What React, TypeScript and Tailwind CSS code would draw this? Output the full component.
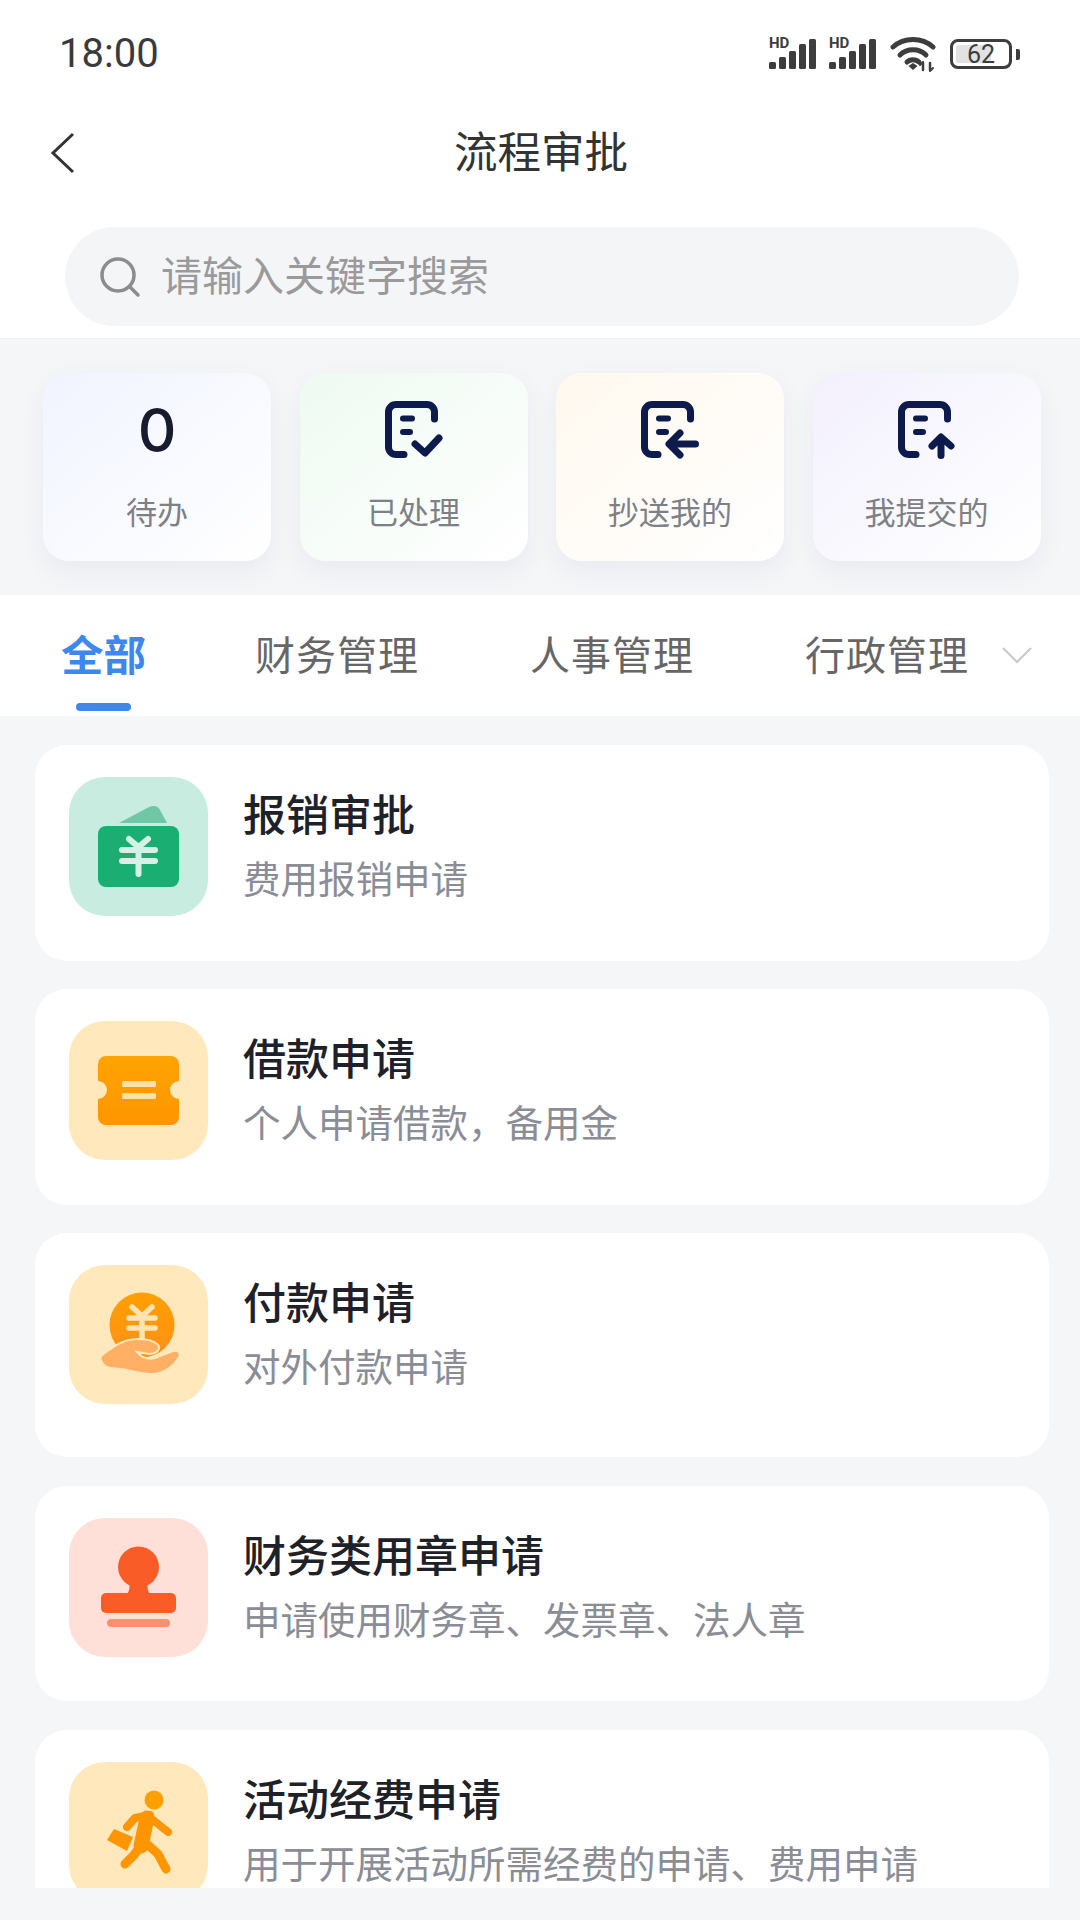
import React from "react";

const Signal = () => (
  <div className="relative w-[47px] h-[30px]">
    <span className="absolute left-0 top-[-3px] text-[#3d3d3d] text-[15px] leading-[15px] font-bold font-['Roboto',sans-serif]">HD</span>
    <svg width="47" height="30" viewBox="0 0 47 30" fill="#3d3d3d">
      <rect x="0" y="23" width="7" height="7" rx="1.5" />
      <rect x="10" y="18" width="7" height="12" rx="1.5" />
      <rect x="20" y="12" width="7" height="18" rx="1.5" />
      <rect x="30" y="5" width="7" height="25" rx="1.5" />
      <rect x="40" y="0" width="7" height="30" rx="1.5" />
    </svg>
  </div>
);

const Wifi = () => (
  <svg width="48" height="36" viewBox="0 0 48 36" fill="none" stroke="#3d3d3d" strokeWidth="5" strokeLinecap="round">
    <path d="M3 11 C14 1 32 1 43 11" />
    <path d="M10 19 C17 12 29 12 36 19" />
    <path d="M17 26 C20 23 26 23 29 26" />
    <path d="M18.500 30 L23 27 L27.500 30 L23 34 Z" fill="#3d3d3d" stroke="none" />
    <path d="M33 27 V34 M40 27 V34" strokeWidth="2.500" />
    <path d="M30 29 L33 26 M40 35 L43 32" strokeWidth="2" />
  </svg>
);

const Battery = () => (
  <div className="flex items-center gap-[4px]">
    <div className="relative flex items-center w-[62px] h-[30px] border-[3px] border-[#3d3d3d] rounded-[8px] p-[3px]">
      <div className="w-[35px] h-full bg-[#e2e2e2] rounded-[2px]" />
      <span className="absolute inset-0 flex items-center justify-center text-[25px] leading-none text-[#3d3d3d] font-['Roboto',sans-serif]">62</span>
    </div>
    <div className="w-[4px] h-[11px] bg-[#3d3d3d] rounded-r-[2px]" />
  </div>
);

const DocIcon = ({ tail, children }: { tail: number; children: React.ReactNode }) => (
  <svg width="58" height="58" viewBox="0 0 58 58" fill="none" stroke="#0d1b4c" strokeLinecap="round" strokeLinejoin="round">
    <path d={`M49.500 18 V11 A7.500 7.500 0 0 0 42 3.500 H11 A7.500 7.500 0 0 0 3.500 11 V46 A7.500 7.500 0 0 0 11 53.500 H${tail}`} strokeWidth="7" />
    <path d="M18 17.500 H27 M18 31 H25" strokeWidth="6" />
    {children}
  </svg>
);

const stats = [
  { label: "待办", bg: "from-[#f1f4ff] to-white" },
  {
    label: "已处理",
    bg: "from-[#eefaf1] to-white",
    icon: (
      <DocIcon tail={19}>
        <path d="M30 43 L40 52 L54 37" strokeWidth="7" />
      </DocIcon>
    ),
  },
  {
    label: "抄送我的",
    bg: "from-[#fff8ee] to-white",
    icon: (
      <DocIcon tail={17}>
        <path d="M29 43 H54.500 M39 32 L28 43 L39 54" strokeWidth="7" />
      </DocIcon>
    ),
  },
  {
    label: "我提交的",
    bg: "from-[#f3f0fd] to-white",
    icon: (
      <DocIcon tail={18}>
        <path d="M43 38 V54.500 M34 45 L43 36 L53 45" strokeWidth="7" />
      </DocIcon>
    ),
  },
];

const Yen = ({ color }: { color: string }) => (
  <g stroke={color} strokeWidth="6" strokeLinecap="round" fill="none">
    <path d="M60 62 L69.500 70 L79 62" />
    <path d="M53 73 H86 M53 84 H86 M69.500 70 V97" />
  </g>
);

const IconBox = ({ bg, children }: { bg: string; children: React.ReactNode }) => (
  <div className={`w-[139px] h-[139px] rounded-[36px] shrink-0 ${bg}`}>
    <svg width="139" height="139" viewBox="0 0 139 139">
      {children}
    </svg>
  </div>
);

const items = [
  {
    title: "报销审批",
    desc: "费用报销申请",
    box: "h-[216px] mb-[28px]",
    icon: (
      <IconBox bg="bg-[#c8ecdf]">
        <path d="M50 46 L80 30 Q88 27 91 33 L98 46 Z" fill="#6fc7a6" />
        <rect x="29" y="49" width="81" height="61" rx="8" fill="#1aae72" />
        <Yen color="#d6f1e6" />
      </IconBox>
    ),
  },
  {
    title: "借款申请",
    desc: "个人申请借款，备用金",
    box: "h-[216px] mb-[28px]",
    icon: (
      <IconBox bg="bg-[#ffe8bc]">
        <defs>
          <linearGradient id="ticket" x1="0" y1="0" x2="0" y2="1">
            <stop offset="0" stopColor="#ffa400" />
            <stop offset="1" stopColor="#ff9500" />
          </linearGradient>
        </defs>
        <path
          d="M37 35 H102 A8 8 0 0 1 110 43 V60 A9 9 0 0 0 110 78 V96 A8 8 0 0 1 102 104 H37 A8 8 0 0 1 29 96 V78 A9 9 0 0 0 29 60 V43 A8 8 0 0 1 37 35 Z"
          fill="url(#ticket)"
        />
        <rect x="53" y="60" width="34" height="6" rx="1.500" fill="#ffe0a8" />
        <rect x="53" y="72" width="34" height="6" rx="1.500" fill="#ffe0a8" />
      </IconBox>
    ),
  },
  {
    title: "付款申请",
    desc: "对外付款申请",
    box: "h-[224px] mb-[29px]",
    icon: (
      <IconBox bg="bg-[#ffe8bc]">
        <defs>
          <linearGradient id="coin" x1="0" y1="0" x2="0" y2="1">
            <stop offset="0" stopColor="#ffa000" />
            <stop offset="1" stopColor="#ff8f1a" />
          </linearGradient>
        </defs>
        <circle cx="73" cy="60" r="32.500" fill="url(#coin)" />
        <g stroke="#ffe3b0" strokeWidth="5.500" strokeLinecap="round" fill="none">
          <path d="M63 42 L73 51 L83 42" />
          <path d="M60 53 H86 M60 63 H86 M73 51 V76" />
        </g>
        <path
          d="M32 91 C41 84 50 77 60 75 C72 73 85 74 90 81 C91 86 86 89 80 89 L68 87 C73 93 80 95 86 93 L104 86 C110 85 112 89 110 92 C104 102 95 108 84 109 C72 110 62 105 52 104 C46 103 40 104 36 101 C33 98 30 94 32 91 Z"
          fill="#ffb065"
          stroke="#ffe8bc"
          strokeWidth="2"
        />
      </IconBox>
    ),
  },
  {
    title: "财务类用章申请",
    desc: "申请使用财务章、发票章、法人章",
    box: "h-[215px] mb-[29px]",
    icon: (
      <IconBox bg="bg-[#ffe0d9]">
        <circle cx="69.500" cy="49" r="20.500" fill="#f95c27" />
        <path d="M60 62 C61 68 61 72 58 76 H81 C78 72 78 68 79 62 Z" fill="#f95c27" />
        <rect x="32" y="75" width="75" height="20" rx="5" fill="#f95c27" />
        <rect x="38" y="101" width="63" height="8" rx="4" fill="#ff8f6d" />
      </IconBox>
    ),
  },
  {
    title: "活动经费申请",
    desc: "用于开展活动所需经费的申请、费用申请",
    box: "h-[214px]",
    icon: (
      <IconBox bg="bg-[#ffe8bc]">
        <circle cx="85" cy="38" r="9.500" fill="#ffa000" />
        <g stroke="#ff9500" strokeLinecap="round" strokeLinejoin="round" fill="none">
          <path d="M58 65 L66 56 L81 53" strokeWidth="8" />
          <path d="M78 56 L72 84" strokeWidth="15" />
          <path d="M84 58 L99 70" strokeWidth="8" />
          <path d="M73 82 L65 93 L56 102" strokeWidth="9" />
          <path d="M78 82 L89 92 L97 107" strokeWidth="9" />
        </g>
        <path d="M45 67 L64 75 L58 89 L38 78 Z" fill="#ff9500" />
      </IconBox>
    ),
  },
];

export default function App() {
  return (
    <div className="h-[1920px] w-[1080px] overflow-hidden flex flex-col bg-white font-['Noto_Sans_CJK_SC','Noto_Sans',sans-serif]">
      {/* status bar */}
      <div className="h-[108px] shrink-0 flex items-center justify-between pl-[59px] pr-[60px]">
        <span className="text-[40px] text-[#3a3a3a] font-['Roboto',sans-serif]">18:00</span>
        <div className="flex items-center">
          <div className="flex gap-[13px] mr-[14px]">
            <Signal />
            <Signal />
          </div>
          <div className="mr-[12px]">
            <Wifi />
          </div>
          <Battery />
        </div>
      </div>

      {/* header */}
      <div className="relative h-[90px] shrink-0 flex items-center justify-center">
        <svg className="absolute left-[50px] top-[24px]" width="26" height="42" viewBox="0 0 26 42" fill="none" stroke="#333" strokeWidth="3">
          <path d="M23 2 L3 21 L23 40" />
        </svg>
        <span className="text-[43.500px] text-[#333] mb-[7px] ml-[2px]">流程审批</span>
      </div>

      {/* search */}
      <div className="shrink-0 pt-[29px] pb-[12px] pl-[65px] pr-[61px]">
        <div className="h-[99px] rounded-full bg-[#f4f5f7] flex items-center pl-[34px] gap-[20px]">
          <svg width="42" height="42" viewBox="0 0 42 42" fill="none" stroke="#8c8c8c" strokeWidth="3.500" strokeLinecap="round">
            <circle cx="19" cy="19" r="16" />
            <path d="M31 31 L39 39" />
          </svg>
          <span className="text-[41px] text-[#9a9a9a] mb-[6px]">请输入关键字搜索</span>
        </div>
      </div>

      {/* stats */}
      <div className="shrink-0 bg-[#f5f6f8] border-t border-[#eef0f2] h-[257px] pt-[34px] pl-[43px] flex gap-[28.500px]">
        {stats.map((s) => (
          <div key={s.label} className={`w-[228px] h-[188px] rounded-[26px] flex flex-col items-center bg-linear-to-br ${s.bg} shadow-[0_10px_26px_rgba(30,50,90,0.06)]`}>
            <div className="h-[113px] pt-[28px] flex items-start justify-center">
              {s.icon ?? <span className="text-[60px] leading-[58px] font-medium text-[#171b2e] font-['Inter',sans-serif]">0</span>}
            </div>
            <span className="text-[31px] leading-[50px] text-[#7d8085]">{s.label}</span>
          </div>
        ))}
      </div>

      {/* tabs */}
      <div className="relative shrink-0 h-[121px] flex pl-[61px] pt-[25px]">
        <div className="relative mr-[109px]">
          <span className="text-[42.500px] leading-[66px] font-semibold text-[#3d87ee]">全部</span>
          <div className="absolute left-[15px] top-[83px] w-[55px] h-[8px] rounded-full bg-[#3d87ee]" />
        </div>
        <div className="flex gap-[111px] text-[40px] leading-[66px] text-[#666] tracking-[1px]">
          <span>财务管理</span>
          <span>人事管理</span>
          <span>行政管理</span>
        </div>
        <svg className="absolute left-[1002px] top-[52px]" width="30" height="17" viewBox="0 0 30 17" fill="none" stroke="#c8c8c8" strokeWidth="2">
          <path d="M1 1 L15 15 L29 1" />
        </svg>
      </div>

      {/* list */}
      <div className="flex-1 min-h-0 overflow-hidden bg-[#f5f6f8] pt-[29px] pl-[35px] pr-[31px]">
        {items.map((it) => (
          <div key={it.title} className={`flex gap-[35px] bg-white rounded-[32px] pt-[32px] px-[34px] ${it.box}`}>
            {it.icon}
            <div className="pt-[9px]">
              <div className="text-[43px] leading-[52px] font-medium text-[#1e2128]">{it.title}</div>
              <div className="mt-[16px] text-[37.500px] leading-[46px] text-[#8a8d96]">{it.desc}</div>
            </div>
          </div>
        ))}
      </div>
      <div className="h-[32px] shrink-0 bg-[#f5f6f8]" />
    </div>
  );
}
